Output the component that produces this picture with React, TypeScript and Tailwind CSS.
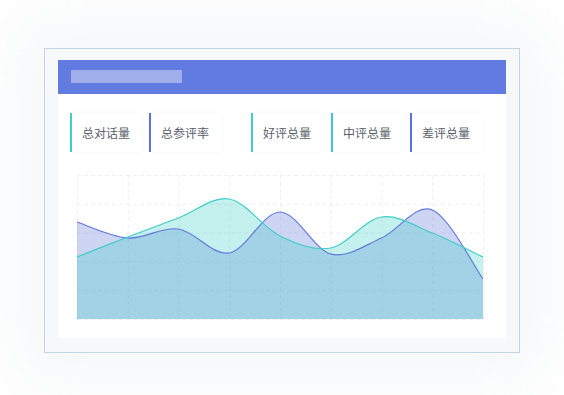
import React from 'react'

const W = 406
const H = 144
const STEP = W / 8

const blue = [47, 63, 54, 78, 37, 79, 63, 35, 104]
const teal = [82, 62, 43, 24, 61, 73, 42, 58, 82]

const tabs = [
  { label: '总对话量', color: '#3ccfcb', w: 72, ml: 0 },
  { label: '总参评率', color: '#5b72d8', w: 73, ml: 7 },
  { label: '好评总量', color: '#3ccfcb', w: 73, ml: 29 },
  { label: '中评总量', color: '#3cc4da', w: 73, ml: 7 },
  { label: '差评总量', color: '#5b72d8', w: 74, ml: 6 },
]

function smooth(ys: number[]) {
  const pts = ys.map((y, i) => [i * STEP, y])
  let d = `M${pts[0][0]},${pts[0][1]}`
  for (let i = 0; i < pts.length - 1; i++) {
    const p0 = pts[i - 1] ?? pts[i]
    const p1 = pts[i]
    const p2 = pts[i + 1]
    const p3 = pts[i + 2] ?? p2
    const c1x = p1[0] + (p2[0] - p0[0]) / 6
    const c1y = p1[1] + (p2[1] - p0[1]) / 6
    const c2x = p2[0] - (p3[0] - p1[0]) / 6
    const c2y = p2[1] - (p3[1] - p1[1]) / 6
    d += ` C${c1x},${c1y} ${c2x},${c2y} ${p2[0]},${p2[1]}`
  }
  return d
}

function AreaChart() {
  const bl = smooth(blue)
  const tl = smooth(teal)
  const close = ` L${W},${H} L0,${H} Z`
  return (
    <svg width={W} height={H} viewBox={`0 0 ${W} ${H}`} className="block overflow-visible">
      <g stroke="#edeff3" strokeWidth="1" strokeDasharray="4 3">
        {Array.from({ length: 9 }).map((_, i) => (
          <line key={'v' + i} x1={i * STEP + 0.5} y1={0} x2={i * STEP + 0.5} y2={H} />
        ))}
        {Array.from({ length: 6 }).map((_, i) => (
          <line key={'h' + i} x1={0} y1={(i * H) / 5 + 0.5} x2={W} y2={(i * H) / 5 + 0.5} />
        ))}
      </g>
      <path d={bl + close} fill="rgba(91,115,216,0.3)" />
      <path d={tl + close} fill="rgba(60,205,200,0.3)" />
      <path d={bl} fill="none" stroke="#6379da" strokeWidth="1.2" />
      <path d={tl} fill="none" stroke="#3ccfc8" strokeWidth="1.2" />
    </svg>
  )
}

export default function App() {
  return (
    <div
      className="h-[395px] w-[564px] overflow-hidden bg-white pl-[44px] pt-[48px]"
      style={{ fontFamily: '"Noto Sans CJK SC", "Noto Sans", sans-serif' }}
    >
      <div className="h-[305px] w-[476px] border border-[#c4d4e8] bg-[#f7f8fa] pl-[13px] pt-[11px] shadow-[0_0_60px_30px_rgba(230,234,238,0.35)]">
        <div className="h-[278px] w-[448px] bg-white">
          <div className="flex h-[34px] items-start bg-[#627be0] pl-[13px] pt-[10px]">
            <div className="h-[13px] w-[111px] bg-[#a1aeec]" />
          </div>
          <div className="flex pl-[12px] pt-[19px]">
            {tabs.map((t) => (
              <div
                key={t.label}
                className="flex h-[39px] items-center border-l-2 bg-white pl-[10px] text-[12px] text-[#5a5f6b] shadow-[0_0_4px_rgba(0,0,0,0.04)]"
                style={{ width: t.w, marginLeft: t.ml, borderColor: t.color }}
              >
                {t.label}
              </div>
            ))}
          </div>
          <div className="pl-[19px] pt-[23px]">
            <AreaChart />
          </div>
        </div>
      </div>
    </div>
  )
}
